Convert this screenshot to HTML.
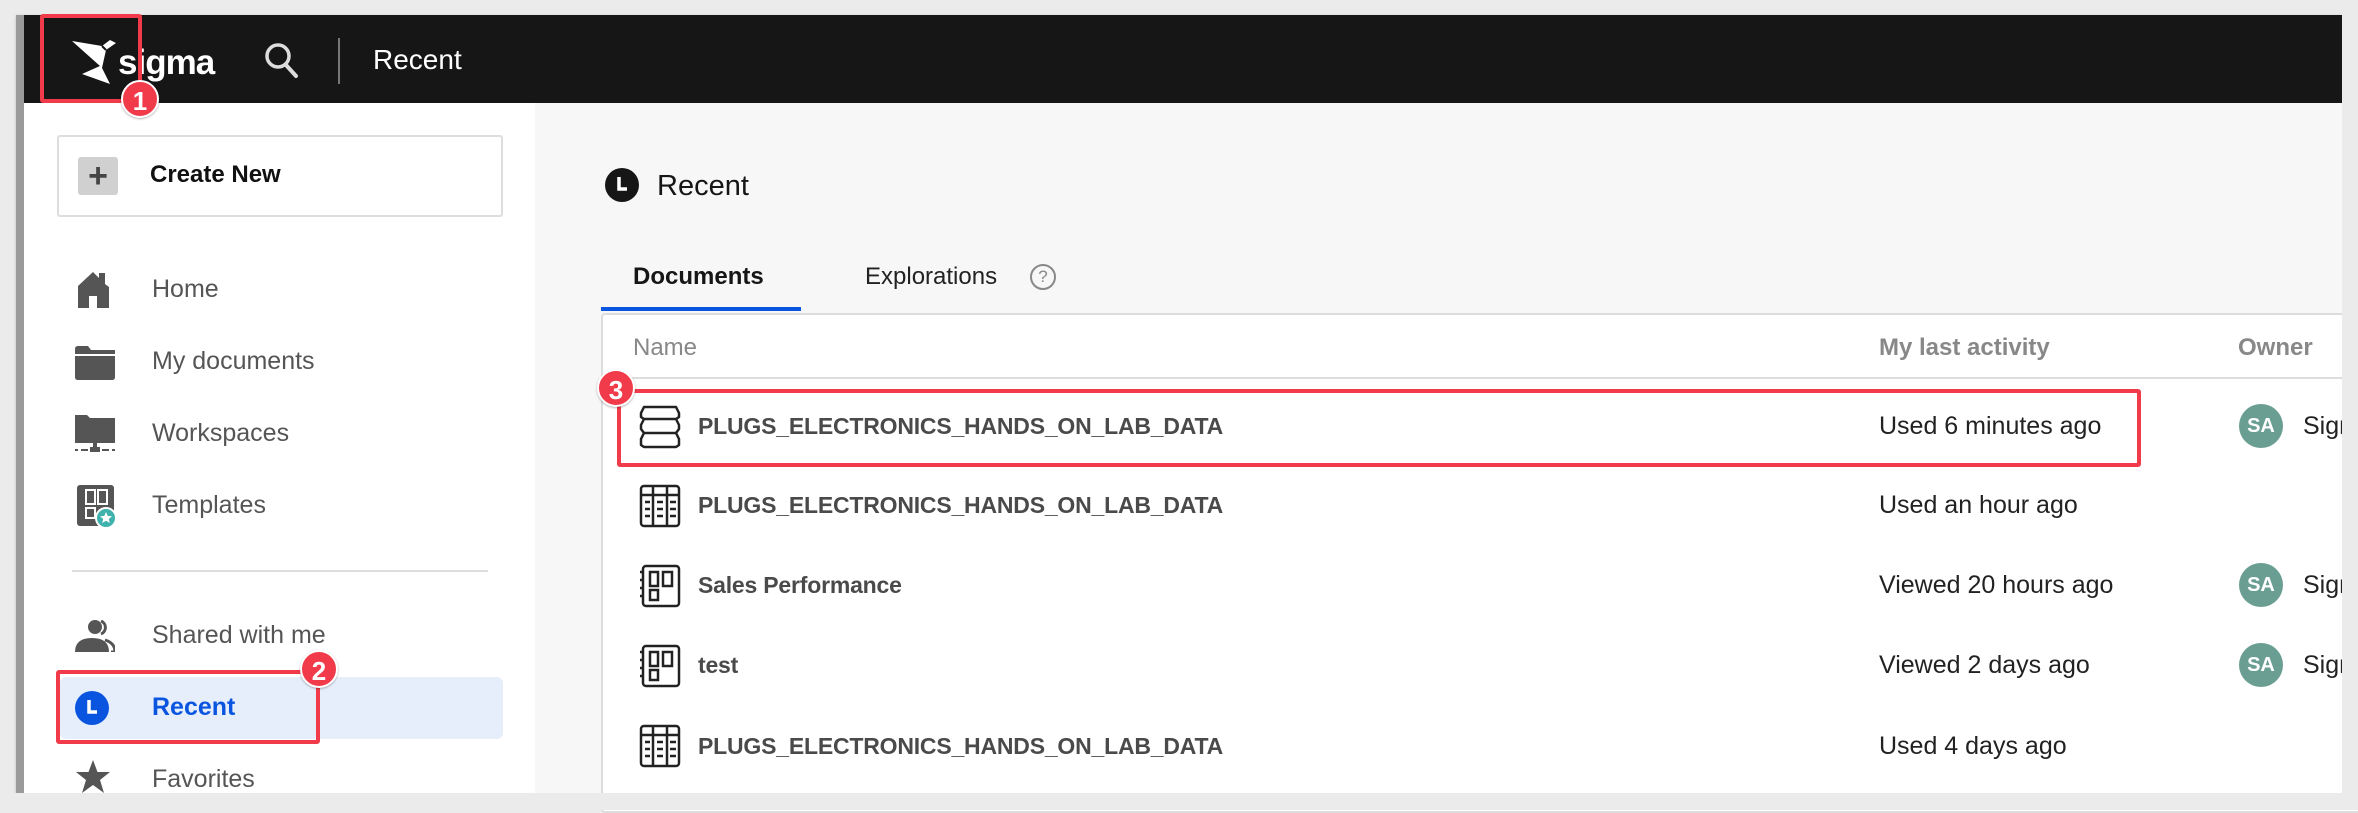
<!DOCTYPE html>
<html><head><meta charset="utf-8"><style>
*{box-sizing:border-box;margin:0;padding:0}
body{width:2358px;height:810px;background:#ebebeb;font-family:"Liberation Sans",sans-serif;position:relative;overflow:hidden}
.abs{position:absolute}
#win{left:16px;top:15px;width:2326px;height:778px;background:#f7f7f7;overflow:hidden;box-shadow:0 1px 3px rgba(0,0,0,.2)}
#lb{left:16px;top:15px;width:8px;height:778px;background:#9a9a9a}
#top{left:16px;top:15px;width:2326px;height:88px;background:#161616}
#side{left:24px;top:103px;width:511px;height:690px;background:#fff}
.nav{position:absolute;left:152px;font-size:25px;color:#555;line-height:30px}
.ico{position:absolute;left:75px}
.red{position:absolute;border:4px solid #f23b4a;border-radius:3px}
.badge{position:absolute;width:38px;height:38px;border-radius:50%;background:#f23b4a;color:#fff;font-weight:bold;font-size:26px;text-align:center;line-height:38px;border:2px solid #fff;box-shadow:0 1px 2px rgba(0,0,0,.3)}
.row{position:absolute;left:698px;font-size:23px;font-weight:bold;color:#4a4a4a;line-height:30px;letter-spacing:-0.2px}
.act{position:absolute;left:1879px;font-size:25px;color:#222;line-height:30px}
.av{position:absolute;left:2239px;width:44px;height:44px;border-radius:50%;background:#6a9e92;color:#fff;font-size:20px;font-weight:bold;text-align:center;line-height:44px}
.sig{position:absolute;left:2303px;font-size:25px;color:#222;line-height:30px}
</style></head><body>
<div id="win" class="abs"></div>
<div id="top" class="abs"></div>
<div id="lb" class="abs"></div>
<div id="side" class="abs"></div>

<!-- logo -->
<svg class="abs" style="left:72px;top:38px" width="44" height="48" viewBox="0 0 44 48"><path d="M0 3 L30 8 L38 2 L44 5 L34 12 L30 30 L38 46 L10 36 L28 28 Z" fill="#fff"/><path d="M30 8 L34 12" stroke="#161616" stroke-width="2"/></svg>
<div class="abs" style="left:118px;top:41px;color:#fff;font-size:35px;font-weight:bold;line-height:44px;letter-spacing:-1px">sigma</div>
<svg class="abs" style="left:264px;top:42px" width="36" height="38" viewBox="0 0 36 38"><circle cx="14" cy="14" r="11" stroke="#ddd" stroke-width="3.5" fill="none"/><path d="M22 23 L32 34" stroke="#ddd" stroke-width="4" stroke-linecap="round"/></svg>
<div class="abs" style="left:338px;top:38px;width:2px;height:46px;background:#777"></div>
<div class="abs" style="left:373px;top:43px;color:#fff;font-size:28px;line-height:34px">Recent</div>
<div class="red" style="left:40px;top:14px;width:102px;height:89px"></div>
<div class="badge" style="left:121px;top:80px">1</div>

<!-- create new -->
<div class="abs" style="left:57px;top:135px;width:446px;height:82px;border:2px solid #ddd;border-radius:3px;background:#fff"></div>
<div class="abs" style="left:78px;top:157px;width:40px;height:38px;background:#d0d0d0;border-radius:3px;color:#444;font-size:34px;text-align:center;line-height:38px;font-weight:bold">+</div>
<div class="abs" style="left:150px;top:160px;font-size:24px;font-weight:bold;color:#111;line-height:30px">Create New</div>

<!-- nav -->
<svg class="ico" style="top:272px" width="40" height="36" viewBox="0 0 40 36"><path d="M3 14 L18 0 L24 6 V1 H30 V12 L34 15 V36 H22 V24 H14 V36 H3 Z" fill="#555"/></svg>
<div class="nav" style="top:274px">Home</div>
<svg class="ico" style="top:346px" width="40" height="34" viewBox="0 0 40 34"><path d="M0 3 Q0 0 3 0 H13 L16 4 H40 V8 H0 Z M0 10 H40 V31 Q40 34 37 34 H3 Q0 34 0 31 Z" fill="#555"/></svg>
<div class="nav" style="top:346px">My documents</div>
<svg class="ico" style="top:414px" width="40" height="40" viewBox="0 0 40 40"><path d="M0 1 H12 L15 4 H40 V29 H0 Z" fill="#555"/><rect x="18" y="29" width="4" height="5" fill="#555"/><rect x="15" y="33" width="10" height="5" fill="#555"/><rect x="0" y="35" width="3" height="2" fill="#555"/><rect x="6" y="35" width="7" height="2" fill="#555"/><rect x="27" y="35" width="7" height="2" fill="#555"/><rect x="37" y="35" width="3" height="2" fill="#555"/></svg>
<div class="nav" style="top:418px">Workspaces</div>
<svg class="ico" style="top:485px" width="42" height="44" viewBox="0 0 42 44"><rect x="2" y="0" width="37" height="41" rx="3" fill="#555"/><rect x="11" y="5" width="9" height="14" fill="none" stroke="#fff" stroke-width="2"/><rect x="23" y="5" width="9" height="14" fill="none" stroke="#fff" stroke-width="2"/><rect x="11" y="23" width="9" height="10" fill="none" stroke="#fff" stroke-width="2"/><circle cx="31" cy="33" r="10" fill="#3fb2ad" stroke="#fff" stroke-width="2"/><path d="M31 27 L32.8 31 L37 31.3 L33.8 34 L34.8 38 L31 35.8 L27.2 38 L28.2 34 L25 31.3 L29.2 31 Z" fill="#fff"/></svg>
<div class="nav" style="top:490px">Templates</div>
<div class="abs" style="left:72px;top:570px;width:416px;height:2px;background:#ddd"></div>
<svg class="ico" style="top:620px" width="40" height="32" viewBox="0 0 40 32"><circle cx="20" cy="7" r="7" fill="#555"/><path d="M26 1 A7 7 0 0 1 26 14" stroke="#555" stroke-width="3" fill="none"/><path d="M0 32 Q0 18 17 18 Q34 18 34 32 Z" fill="#555"/><path d="M30 20 Q40 23 40 32 H36" stroke="#555" stroke-width="3" fill="none"/></svg>
<div class="nav" style="top:620px">Shared with me</div>
<div class="abs" style="left:60px;top:677px;width:443px;height:62px;background:#e6eefb;border-radius:6px"></div>
<svg class="ico" style="top:691px" width="34" height="34" viewBox="0 0 34 34"><circle cx="17" cy="17" r="17" fill="#0a55e0"/><path d="M14 9 V21 H22" stroke="#fff" stroke-width="3.5" fill="none"/></svg>
<div class="nav" style="top:692px;color:#0a55e0;font-weight:bold">Recent</div>
<div class="red" style="left:56px;top:670px;width:264px;height:74px"></div>
<div class="badge" style="left:300px;top:650px">2</div>
<svg class="ico" style="top:760px" width="36" height="34" viewBox="0 0 36 34"><path d="M18 0 L22.5 12 H35 L25 20 L29 33 L18 25 L7 33 L11 20 L1 12 H13.5 Z" fill="#555"/></svg>
<div class="nav" style="top:764px">Favorites</div>

<!-- main header -->
<svg class="abs" style="left:605px;top:168px" width="34" height="34" viewBox="0 0 34 34"><circle cx="17" cy="17" r="17" fill="#161616"/><path d="M14 9 V21 H22" stroke="#fff" stroke-width="3.5" fill="none"/></svg>
<div class="abs" style="left:657px;top:169px;font-size:29px;color:#161616;line-height:34px">Recent</div>
<div class="abs" style="left:633px;top:262px;font-size:24px;font-weight:bold;color:#161616;line-height:30px">Documents</div>
<div class="abs" style="left:601px;top:307px;width:200px;height:4px;background:#0a55e0"></div>
<div class="abs" style="left:865px;top:262px;font-size:24px;color:#222;line-height:30px">Explorations</div>
<div class="abs" style="left:1030px;top:264px;width:26px;height:26px;border:2px solid #888;border-radius:50%;color:#888;font-size:17px;text-align:center;line-height:22px">?</div>

<!-- table -->
<div class="abs" style="left:601px;top:313px;width:1760px;height:500px;background:#fff;border:2px solid #ddd;border-radius:4px"></div>
<div class="abs" style="left:603px;top:377px;width:1740px;height:2px;background:#ddd"></div>
<div class="abs" style="left:633px;top:333px;font-size:24px;color:#888;line-height:30px">Name</div>
<div class="abs" style="left:1879px;top:333px;font-size:24px;color:#888;font-weight:bold;line-height:30px">My last activity</div>
<div class="abs" style="left:2238px;top:333px;font-size:24px;color:#888;font-weight:bold;line-height:30px">Owner</div>

<svg class="abs" style="left:639px;top:405px" width="42" height="44" viewBox="0 0 42 44"><path d="M5 2 H37 L40 8 V12 L37 14 H5 L2 12 V8 Z M5 14 H37 L40 20 V24 L37 28 H5 L2 24 V20 Z M5 28 H37 L40 34 V40 L37 42 H5 L2 40 V34 Z" fill="none" stroke="#222" stroke-width="2.5" stroke-linejoin="round"/></svg>
<div class="row" style="top:411px">PLUGS_ELECTRONICS_HANDS_ON_LAB_DATA</div>
<div class="act" style="top:411px">Used 6 minutes ago</div>
<div class="av" style="top:404px">SA</div><div class="sig" style="top:411px">Sigma</div>

<svg class="abs" style="left:639px;top:484px" width="42" height="44" viewBox="0 0 42 44"><rect x="2" y="2" width="38" height="40" rx="3" fill="none" stroke="#222" stroke-width="2.5"/><path d="M2 11 H40 M14 2 V42 M28 2 V42" stroke="#222" stroke-width="2.5"/><path d="M6 18 H11 M6 25 H11 M6 32 H11 M18 18 H24 M18 25 H24 M18 32 H24 M31 18 H37 M31 25 H37 M31 32 H37" stroke="#222" stroke-width="2.5"/></svg>
<div class="row" style="top:490px">PLUGS_ELECTRONICS_HANDS_ON_LAB_DATA</div>
<div class="act" style="top:490px">Used an hour ago</div>

<svg class="abs" style="left:639px;top:564px" width="42" height="44" viewBox="0 0 42 44"><rect x="4" y="2" width="36" height="40" rx="3" fill="none" stroke="#222" stroke-width="2.5"/><path d="M1 8 H5 M1 16 H5 M1 24 H5 M1 32 H5" stroke="#222" stroke-width="2.5"/><rect x="11" y="8" width="8" height="14" fill="none" stroke="#222" stroke-width="2.5"/><rect x="24" y="8" width="9" height="14" fill="none" stroke="#222" stroke-width="2.5"/><rect x="11" y="26" width="8" height="10" fill="none" stroke="#222" stroke-width="2.5"/></svg>
<div class="row" style="top:570px">Sales Performance</div>
<div class="act" style="top:570px">Viewed 20 hours ago</div>
<div class="av" style="top:563px">SA</div><div class="sig" style="top:570px">Sigma</div>

<svg class="abs" style="left:639px;top:644px" width="42" height="44" viewBox="0 0 42 44"><rect x="4" y="2" width="36" height="40" rx="3" fill="none" stroke="#222" stroke-width="2.5"/><path d="M1 8 H5 M1 16 H5 M1 24 H5 M1 32 H5" stroke="#222" stroke-width="2.5"/><rect x="11" y="8" width="8" height="14" fill="none" stroke="#222" stroke-width="2.5"/><rect x="24" y="8" width="9" height="14" fill="none" stroke="#222" stroke-width="2.5"/><rect x="11" y="26" width="8" height="10" fill="none" stroke="#222" stroke-width="2.5"/></svg>
<div class="row" style="top:650px">test</div>
<div class="act" style="top:650px">Viewed 2 days ago</div>
<div class="av" style="top:643px">SA</div><div class="sig" style="top:650px">Sigma</div>

<svg class="abs" style="left:639px;top:724px" width="42" height="44" viewBox="0 0 42 44"><rect x="2" y="2" width="38" height="40" rx="3" fill="none" stroke="#222" stroke-width="2.5"/><path d="M2 11 H40 M14 2 V42 M28 2 V42" stroke="#222" stroke-width="2.5"/><path d="M6 18 H11 M6 25 H11 M6 32 H11 M18 18 H24 M18 25 H24 M18 32 H24 M31 18 H37 M31 25 H37 M31 32 H37" stroke="#222" stroke-width="2.5"/></svg>
<div class="row" style="top:731px">PLUGS_ELECTRONICS_HANDS_ON_LAB_DATA</div>
<div class="act" style="top:731px">Used 4 days ago</div>

<div class="red" style="left:617px;top:389px;width:1524px;height:78px"></div>
<div class="badge" style="left:597px;top:369px">3</div>

<!-- cover right overflow -->
<div class="abs" style="left:2342px;top:0;width:16px;height:810px;background:#ebebeb"></div>
<div class="abs" style="left:0;top:793px;width:2358px;height:17px;background:#ebebeb"></div>
</body></html>
